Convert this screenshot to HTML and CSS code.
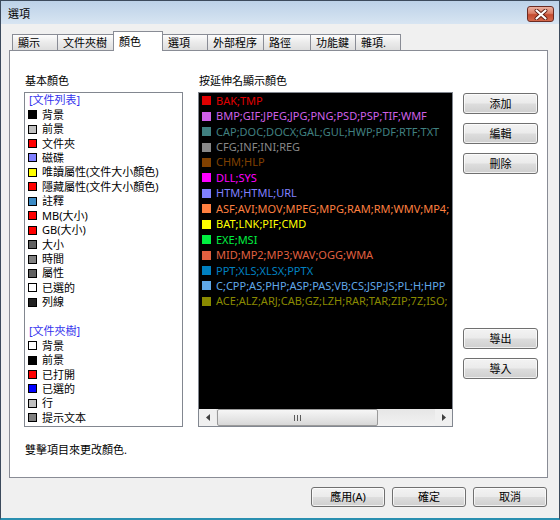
FILE: index.html
```html
<!DOCTYPE html>
<html>
<head>
<meta charset="utf-8">
<link rel="stylesheet" href="styles.css">
</head>
<body>
<div class="window">
  <div class="titlebar">
    <span class="title">選項</span>
    <div class="close">
      <svg width="14" height="11" viewBox="0 0 14 11"><path d="M2.5 1.5 L11.5 9.5 M11.5 1.5 L2.5 9.5" stroke="#5a1a10" stroke-width="3.8" stroke-linecap="round"/><path d="M2.5 1.5 L11.5 9.5 M11.5 1.5 L2.5 9.5" stroke="#ffffff" stroke-width="2.2" stroke-linecap="round"/></svg>
    </div>
  </div>
  <div class="client">
    <div class="tabs">
      <div class="tab">顯示</div>
      <div class="tab">文件夾樹</div>
      <div class="tab active">顏色</div>
      <div class="tab">選項</div>
      <div class="tab">外部程序</div>
      <div class="tab wide">路徑</div>
      <div class="tab">功能鍵</div>
      <div class="tab">雜項.</div>
    </div>
    <div class="panel">
      <div class="labels">
        <div class="lbl lbl-left">基本顏色</div>
        <div class="lbl">按延伸名顯示顏色</div>
      </div>
      <div class="boxes">
        <div class="listbox basic">
          <div class="row head">[文件列表]</div>
          <div class="row"><span class="sw c-black"></span>背景</div>
          <div class="row"><span class="sw c-silver"></span>前景</div>
          <div class="row"><span class="sw c-red"></span>文件夾</div>
          <div class="row"><span class="sw c-lav"></span>磁碟</div>
          <div class="row"><span class="sw c-yellow"></span>唯讀屬性(文件大小顏色)</div>
          <div class="row"><span class="sw c-red"></span>隱藏屬性(文件大小顏色)</div>
          <div class="row"><span class="sw c-steel"></span>註釋</div>
          <div class="row"><span class="sw c-red"></span>MB(大小)</div>
          <div class="row"><span class="sw c-red"></span>GB(大小)</div>
          <div class="row"><span class="sw c-dgray"></span>大小</div>
          <div class="row"><span class="sw c-gray"></span>時間</div>
          <div class="row"><span class="sw c-dgray"></span>屬性</div>
          <div class="row"><span class="sw c-white"></span>已選的</div>
          <div class="row"><span class="sw c-nearblack"></span>列線</div>
          <div class="row"></div>
          <div class="row head">[文件夾樹]</div>
          <div class="row"><span class="sw c-white"></span>背景</div>
          <div class="row"><span class="sw c-black"></span>前景</div>
          <div class="row"><span class="sw c-red"></span>已打開</div>
          <div class="row"><span class="sw c-blue"></span>已選的</div>
          <div class="row"><span class="sw c-silver"></span>行</div>
          <div class="row"><span class="sw c-gray"></span>提示文本</div>
        </div>
        <div class="listbox ext">
          <div class="ext-rows">
            <div class="erow e1"><span class="esw"></span>BAK;TMP</div>
            <div class="erow e2"><span class="esw"></span>BMP;GIF;JPEG;JPG;PNG;PSD;PSP;TIF;WMF</div>
            <div class="erow e3"><span class="esw"></span>CAP;DOC;DOCX;GAL;GUL;HWP;PDF;RTF;TXT</div>
            <div class="erow e4"><span class="esw"></span>CFG;INF;INI;REG</div>
            <div class="erow e5"><span class="esw"></span>CHM;HLP</div>
            <div class="erow e6"><span class="esw"></span>DLL;SYS</div>
            <div class="erow e7"><span class="esw"></span>HTM;HTML;URL</div>
            <div class="erow e8"><span class="esw"></span>ASF;AVI;MOV;MPEG;MPG;RAM;RM;WMV;MP4;</div>
            <div class="erow e9"><span class="esw"></span>BAT;LNK;PIF;CMD</div>
            <div class="erow e10"><span class="esw"></span>EXE;MSI</div>
            <div class="erow e11"><span class="esw"></span>MID;MP2;MP3;WAV;OGG;WMA</div>
            <div class="erow e12"><span class="esw"></span>PPT;XLS;XLSX;PPTX</div>
            <div class="erow e13"><span class="esw"></span>C;CPP;AS;PHP;ASP;PAS;VB;CS;JSP;JS;PL;H;HPP</div>
            <div class="erow e14"><span class="esw"></span>ACE;ALZ;ARJ;CAB;GZ;LZH;RAR;TAR;ZIP;7Z;ISO;</div>
          </div>
          <div class="hscroll">
            <div class="sbtn"><svg width="4" height="7" viewBox="0 0 4 7"><path d="M4 0 L0 3.5 L4 7 Z" fill="#404040"/></svg></div>
            <div class="track">
              <div class="thumb"><span class="grip"></span></div>
            </div>
            <div class="sbtn"><svg width="4" height="7" viewBox="0 0 4 7"><path d="M0 0 L4 3.5 L0 7 Z" fill="#404040"/></svg></div>
          </div>
        </div>
        <div class="side">
          <div class="btn">添加</div>
          <div class="btn">編輯</div>
          <div class="btn">刪除</div>
          <div class="btn gap-top">導出</div>
          <div class="btn">導入</div>
        </div>
      </div>
      <div class="hint">雙擊項目來更改顏色.</div>
    </div>
    <div class="footer">
      <div class="btn fbtn">應用(A)</div>
      <div class="btn fbtn">確定</div>
      <div class="btn fbtn">取消</div>
    </div>
  </div>
</div>
</body>
</html>
```
FILE: styles.css
```css
html, body {
  margin: 0;
  padding: 0;
  background: #f0f0f0;
}
body {
  font-family: "Noto Sans", "Noto Sans CJK TC", sans-serif;
  font-size: 11px;
  color: #000;
}
.window {
  width: 560px;
  height: 520px;
  box-sizing: border-box;
  border: 1px solid #3c4a5c;
  border-bottom: 2px solid #2a8fb0;
  background: #f0f0f0;
  display: flex;
  flex-direction: column;
}
.titlebar {
  height: 23px;
  flex: 0 0 auto;
  background: linear-gradient(#bcd1e8, #cfdfef 70%, #d8e5f2);
  display: flex;
  align-items: flex-start;
  justify-content: space-between;
  padding: 0 5px 0 7px;
}
.title {
  font-size: 11px;
  line-height: 14px;
  padding-top: 6px;
}
.close {
  width: 27px;
  height: 16px;
  box-sizing: border-box;
  border: 1px solid #6b2b22;
  border-radius: 3px;
  background: linear-gradient(#eab0a0, #dc7e66 45%, #c44a2f 55%, #d4694d);
  display: flex;
  align-items: center;
  justify-content: center;
  margin-top: 5px;
}
.close svg { display: block; }
.client {
  flex: 1;
  display: flex;
  flex-direction: column;
  padding: 7px 11px 0 8px;
}
.tabs {
  display: flex;
  align-items: flex-end;
  height: 19px;
  padding-left: 3px;
}
.tab {
  box-sizing: border-box;
  min-width: 46px;
  height: 16px;
  padding: 1px 6px 0 5px;
  margin-left: -1px;
  line-height: 14px;
  border: 1px solid #898c95;
  border-bottom: none;
  background: linear-gradient(#fdfdfd, #ebebeb 50%, #dedede);
  white-space: nowrap;
}
.tab:first-child { margin-left: 0; }
.tab.wide { min-width: 48px; }
.tab.active {
  position: relative;
  z-index: 2;
  min-width: 50px;
  height: 20px;
  margin-bottom: -1px;
  padding: 3px 6px 0 5px;
  background: #ffffff;
}
.panel {
  position: relative;
  z-index: 1;
  height: 428px;
  box-sizing: border-box;
  border: 1px solid #898c95;
  background: #ffffff;
  padding: 23px 0 0 14px;
}
.labels {
  display: flex;
  line-height: 14px;
}
.lbl { padding-left: 1px; }
.lbl-left { width: 173px; }
.boxes {
  display: flex;
  align-items: flex-start;
  margin-top: 4px;
}
.listbox {
  box-sizing: border-box;
  height: 335px;
  border: 1px solid #828790;
  overflow: hidden;
}
.basic {
  width: 159px;
  background: #fff;
  padding-left: 3px;
}
.row {
  display: flex;
  align-items: center;
  gap: 5px;
  height: 14.45px;
  line-height: 14px;
  white-space: nowrap;
}
.row.head {
  color: #3333ee;
  padding-left: 1px;
}
.sw {
  width: 9px;
  height: 9px;
  box-sizing: border-box;
  border: 1px solid #000;
  flex: 0 0 auto;
}
.c-black { background: #000000; }
.c-silver { background: #c0c0c0; }
.c-red { background: #ff0000; }
.c-lav { background: #8080ff; }
.c-yellow { background: #ffff00; }
.c-steel { background: #3b8ac4; }
.c-dgray { background: #606060; }
.c-gray { background: #808080; }
.c-white { background: #ffffff; }
.c-nearblack { background: #202020; }
.c-blue { background: #0000ff; }
.ext {
  width: 255px;
  margin-left: 15px;
  background: #000;
  display: flex;
  flex-direction: column;
}
.ext-rows {
  flex: 1;
  overflow: hidden;
  padding-left: 3px;
}
.erow {
  display: flex;
  align-items: center;
  gap: 5px;
  height: 15.45px;
  line-height: 14px;
  white-space: nowrap;
}
.esw {
  width: 9px;
  height: 9px;
  flex: 0 0 auto;
  background: currentColor;
}
.e1 { color: #e00000; }
.e2 { color: #d060e8; }
.e3 { color: #408080; }
.e4 { color: #888888; }
.e5 { color: #804000; }
.e6 { color: #ff00ff; }
.e7 { color: #8080ff; }
.e8 { color: #ff8040; }
.e9 { color: #ffff00; }
.e10 { color: #00f040; }
.e11 { color: #e06040; }
.e12 { color: #0080c0; }
.e13 { color: #60a8e8; }
.e14 { color: #8a8a00; }
.hscroll {
  height: 17px;
  flex: 0 0 auto;
  display: flex;
  background: #f0f0f0;
}
.sbtn {
  width: 17px;
  display: flex;
  align-items: center;
  justify-content: center;
}
.sbtn svg { display: block; }
.track {
  flex: 1;
  display: flex;
  align-items: stretch;
  padding: 0 0 0 1px;
  background: linear-gradient(#e6e6e6, #f2f2f2);
}
.thumb {
  width: 161px;
  box-sizing: border-box;
  border: 1px solid #9a9a9a;
  border-radius: 2px;
  background: linear-gradient(#f6f6f6, #e8e8e8 50%, #d8d8d8);
  display: flex;
  align-items: center;
  justify-content: center;
}
.grip {
  width: 7px;
  height: 6px;
  background: repeating-linear-gradient(90deg, #5a5a5a 0 1px, transparent 1px 3px);
}
.side {
  margin-left: 10px;
  padding-top: 1px;
  display: flex;
  flex-direction: column;
  gap: 9px;
}
.btn {
  width: 75px;
  height: 21px;
  box-sizing: border-box;
  border: 1px solid #707070;
  border-radius: 3px;
  background: linear-gradient(#f3f3f3, #ebebeb 48%, #dddddd 52%, #cfcfcf);
  display: flex;
  align-items: center;
  justify-content: center;
  line-height: 14px;
  box-shadow: inset 0 0 0 1px rgba(255,255,255,0.7);
}
.side .gap-top { margin-top: 145px; }
.hint {
  margin-top: 16px;
  padding-left: 1px;
  line-height: 14px;
}
.footer {
  display: flex;
  justify-content: flex-end;
  gap: 7px;
  margin-top: 9px;
  padding-right: 1px;
}
.fbtn {
  width: 74px;
  height: 20px;
}
```
